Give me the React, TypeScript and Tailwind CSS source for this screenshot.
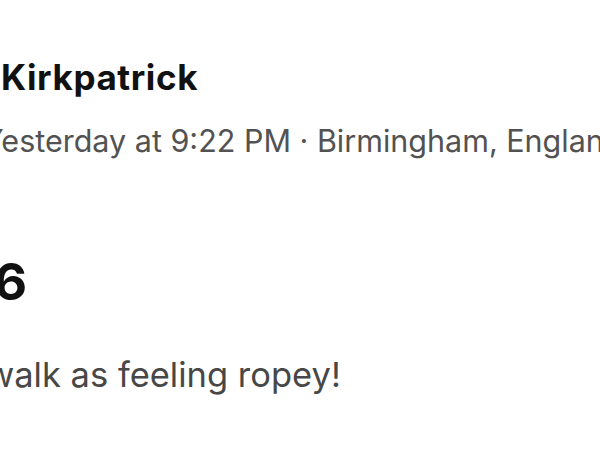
export default function App() {
  return (
    <div className="w-[600px] h-[450px] overflow-hidden bg-white font-['Inter',sans-serif]">
      <div className="pt-[55px] whitespace-nowrap">
        <h1 className="ml-[1px] text-[35px] leading-[44px] font-bold text-[#111] tracking-[0.6px]">
          Kirkpatrick
        </h1>
        <p className="ml-[-17px] mt-[22px] text-[30.5px] leading-[40px] text-[#525252]">
          Yesterday at 9:22 PM · Birmingham, Englan
        </p>
        <h2 className="ml-[-6px] mt-[91px] text-[51px] leading-[60px] font-bold text-[#111]">
          6
        </h2>
        <p className="ml-[-14px] mt-[43px] text-[34.5px] leading-[40px] text-[#474747]">
          walk as feeling ropey!
        </p>
      </div>
    </div>
  );
}
